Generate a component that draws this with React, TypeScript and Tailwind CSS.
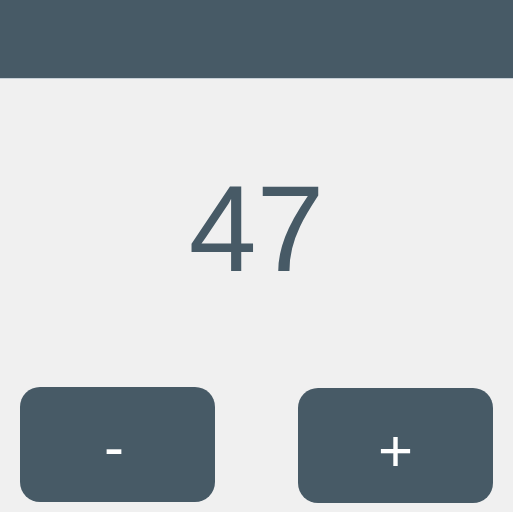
export default function App() {
  return (
    <div className="flex h-[512px] w-full flex-col bg-[#f0f0f0] font-['Liberation_Sans',Arial,sans-serif]">
      <div className="h-[79px] border-b border-[#c6cfd6] bg-[#475a66]" />
      <div className="mt-[90px] flex h-[120px] items-center justify-center text-[122px] leading-none text-[#475a66]">
        47
      </div>
      <div className="mt-[98px] flex justify-between px-5">
        <button className="flex h-[115px] w-[195px] items-center justify-center rounded-[20px] bg-[#475a66] pr-[7px] pt-[4px] text-[60px] leading-none text-white">
          -
        </button>
        <button className="mt-px flex h-[115px] w-[195px] items-center justify-center rounded-[20px] bg-[#475a66] pt-[11px] text-[60px] leading-none text-white">
          +
        </button>
      </div>
    </div>
  );
}
